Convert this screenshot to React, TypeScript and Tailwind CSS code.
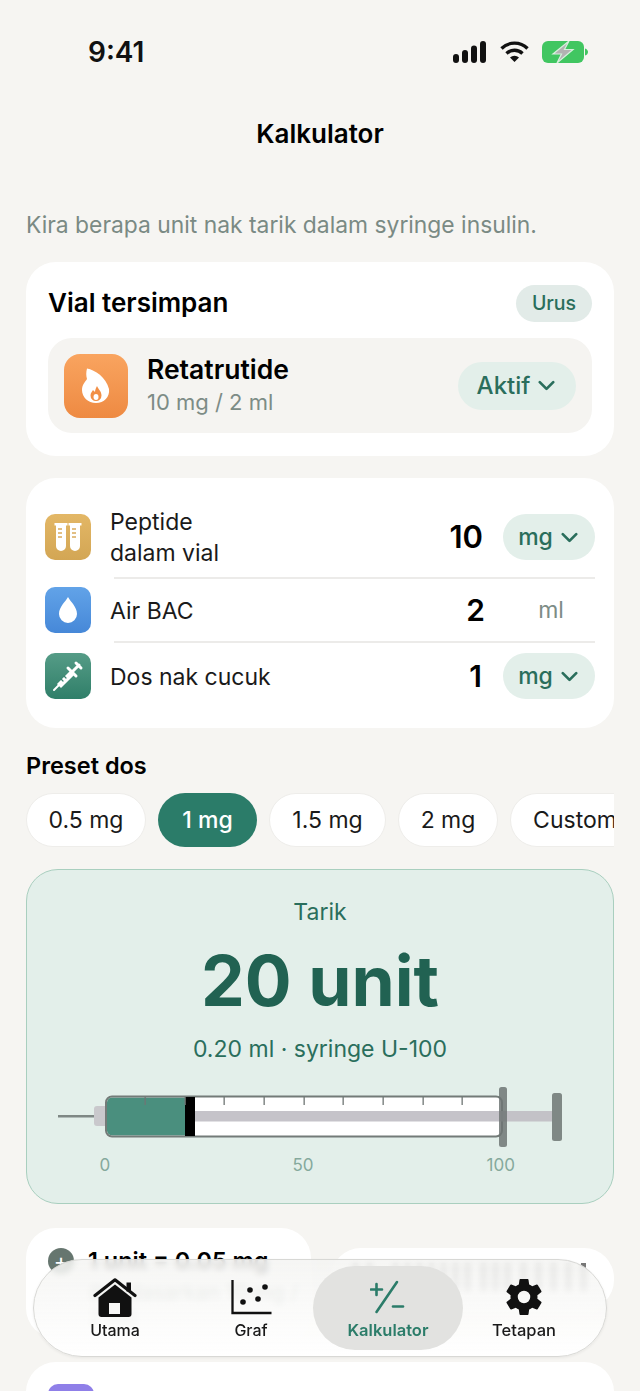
import React from 'react';
import { ChevronDown } from 'lucide-react';
import { IoSettingsSharp } from 'react-icons/io5';

// Pill with unit dropdown
const UnitPill = ({ label }: { label: string }) => (
  <div className="flex h-[46px] w-[92px] items-center justify-center gap-[3px] rounded-full bg-[#e3efea] pl-[3px] text-[23px] font-medium text-[#2a6e5c]">
    {label}
    <ChevronDown size={27} strokeWidth={2.4} />
  </div>
);

const IconTile = ({ className, children }: { className: string; children: React.ReactNode }) => (
  <div className={`flex h-[46px] w-[46px] shrink-0 items-center justify-center rounded-[10px] ${className}`}>
    {children}
  </div>
);

const Tubes = () => (
  <svg width="34" height="34" viewBox="0 0 34 34" fill="white">
    <path d="M3.500 3h13v2.500H15V26a5 5 0 0 1-10 0V5.500H3.500z" />
    <path d="M17.500 3h13v2.500H29V26a5 5 0 0 1-10 0V5.500h-1.500z" />
    <path d="M7 9h4M7 13h4M7 17h4M21 9h4M21 13h4M21 17h4" stroke="#d9ab5c" strokeWidth="1.5" />
  </svg>
);

const Drop = () => (
  <svg width="18" height="26" viewBox="0 0 18 26" fill="white">
    <path d="M9 0c2.500 5 9 9.500 9 17a9 9 0 0 1-18 0C0 9.500 6.500 5 9 0z" />
  </svg>
);

const SyringeIcon = () => (
  <svg width="32" height="32" viewBox="0 0 32 32" fill="none" stroke="white" strokeLinecap="round">
    <path d="M2 30l6-6" strokeWidth="2" />
    <path d="M7 25l12-12 3 3-12 12z" fill="white" strokeWidth="1.5" transform="translate(-1 -1)" />
    <path d="M16 8l8 8M21 11l6-6M24 3l5 5" strokeWidth="3" />
    <path d="M9 19l2 2M12 16l2 2" stroke="#3b8470" strokeWidth="1.2" />
  </svg>
);

const Flame = () => (
  <svg width="28" height="35" viewBox="0 0 28 35">
    <path
      d="M5 .5C13 2 24 9 27 21c1 8-5 14-13 14S0 29 0 22c0-5 3-8 5-11C4 8 4 4 5 .5z"
      fill="white"
    />
    <path d="M15 18c1 3 4.500 5 4.500 9.500a5.500 5.500 0 0 1-11 0c0-2.500 1.500-4 2.500-5.500 1 1 1.500 1.500 2 2 0-2 1-4 2-6z" fill="#f28f45" />
    <ellipse cx="14" cy="29" rx="2.500" ry="3" fill="white" />
  </svg>
);

const HouseIcon = () => (
  <svg width="44" height="39" viewBox="0 0 44 39" className="text-[#111]">
    <path d="M5.500 19.500L22 6.500l16.500 13V36a3 3 0 0 1-3 3h-27a3 3 0 0 1-3-3z" fill="currentColor" />
    <path d="M2 17.500L22 1.800l20 15.700" fill="none" stroke="currentColor" strokeWidth="3.200" strokeLinecap="round" strokeLinejoin="round" />
    <path d="M33.500 4.500h4.500v9h-4.500z" fill="currentColor" />
    <rect x="16" y="25" width="11" height="11" fill="#f7f7f6" />
  </svg>
);

const ChartIcon = () => (
  <svg width="41" height="36" viewBox="0 0 41 36" className="text-[#111]">
    <path d="M1.500 1v33h39" fill="none" stroke="currentColor" strokeWidth="2.300" />
    <circle cx="12" cy="23" r="2.800" fill="currentColor" />
    <circle cx="19" cy="11" r="2.800" fill="currentColor" />
    <circle cx="27" cy="20" r="2.800" fill="currentColor" />
    <circle cx="34" cy="8" r="2.800" fill="currentColor" />
  </svg>
);

const PlusMinusIcon = () => (
  <svg width="36" height="36" viewBox="0 0 36 36" stroke="#2b7c69" strokeWidth="2.600" strokeLinecap="round" fill="none">
    <path d="M27 3L6.500 33" />
    <path d="M1 10.500h11M6.500 5v11" />
    <path d="M23 27.500h10" />
  </svg>
);

const Syringe = () => (
  <svg width="520" height="66" viewBox="0 0 520 66" className="block">
    <rect x="0" y="28" width="37" height="2.500" fill="#7f8885" />
    <rect x="36" y="19" width="14" height="20" rx="3" fill="#c9c8cc" />
    <rect x="48" y="9.500" width="396" height="40" rx="6" fill="white" />
    <path d="M54 10.500h73v38H54a5 5 0 0 1-5-5v-28a5 5 0 0 1 5-5z" fill="#4a8f7e" />
    <rect x="48" y="9.500" width="396" height="40" rx="6" fill="none" stroke="#737b78" strokeWidth="2" />
    <rect x="127" y="10" width="10" height="39" fill="black" />
    <rect x="137" y="24" width="358" height="10.500" fill="#bfbdc3" fillOpacity="0.9" />
    {[87, 127, 166, 206, 246, 285, 325, 365, 404].map((x) => (
      <rect key={x} x={x - 0.5} y="10" width="1.300" height="8" fill="#6f7674" />
    ))}
    <rect x="441" y="0" width="8" height="60" rx="2.500" fill="#6f7674" fillOpacity="0.85" />
    <rect x="494" y="6" width="10" height="48" rx="2.500" fill="#7f8885" />
  </svg>
);

const presets = [
  { label: '0.5 mg', width: 'w-[120px]' },
  { label: '1 mg', width: 'w-[99px]' },
  { label: '1.5 mg', width: 'w-[117px]' },
  { label: '2 mg', width: 'w-[100px]' },
  { label: 'Custom', width: 'w-[130px]' },
];

export default function App() {
  return (
    <div className="relative h-[1391px] w-[640px] overflow-hidden bg-[#f6f5f2] font-['Inter',sans-serif] text-black">
      {/* Status bar */}
      <div className="flex h-[102px] items-start justify-between pl-[88px] pr-[52px] pt-[36px]">
        <span className="text-[28px] font-semibold leading-[32px] text-[#111]">9:41</span>
        <div className="mt-[5px] flex items-center gap-[12px]">
          <svg width="34" height="22" viewBox="0 0 34 22" fill="#111">
            <rect x="0" y="13" width="6" height="9" rx="3" />
            <rect x="9" y="9" width="6" height="13" rx="3" />
            <rect x="18" y="4.500" width="6" height="17.500" rx="3" />
            <rect x="27" y="0" width="6" height="22" rx="3" />
          </svg>
          <svg width="31" height="22" viewBox="0 0 30 22" fill="none" stroke="#111" strokeWidth="3.400">
            <path d="M2 7.500a18.500 18.500 0 0 1 26 0" />
            <path d="M7 12.500a11.500 11.500 0 0 1 16 0" />
            <path d="M15 21l-4.500-4.500a6.400 6.400 0 0 1 9 0z" fill="#111" stroke="none" />
          </svg>
          <svg width="46" height="22" viewBox="0 0 46 22">
            <rect x="0" y="0" width="42" height="22" rx="6" fill="#41c661" />
            <path d="M43 7.500c2 .5 3 2 3 3.500s-1 3-3 3.500z" fill="#41c661" />
            <path d="M27 0L11 13h8.500L15 22l16-13.500h-8.500z" fill="#b2b2b2" stroke="#d6f0dd" strokeWidth="1.200" />
          </svg>
        </div>
      </div>

      {/* Header */}
      <h1 className="mt-[16px] text-center text-[26px] font-semibold leading-[32px]">Kalkulator</h1>

      <div className="px-[26px]">
        <p className="mt-[60px] text-[22.850px] leading-[30px] text-[#7a8a84]">Kira berapa unit nak tarik dalam syringe insulin.</p>

        {/* Saved vial */}
        <section className="mt-[22px] h-[194px] rounded-[30px] bg-white pl-[22px] pr-[22px] pt-[23px]">
          <div className="flex h-[37px] items-center justify-between">
            <h2 className="pb-[2px] text-[26px] font-semibold">Vial tersimpan</h2>
            <span className="flex h-[37px] w-[76px] items-center justify-center rounded-full bg-[#e2ebe8] pt-[1px] text-[19.500px] font-medium text-[#2a6e5c]">Urus</span>
          </div>
          <div className="mt-[16px] flex h-[95px] items-center rounded-[24px] bg-[#f5f4f1] pl-[16px] pr-[16px]">
            <div className="flex h-[64px] w-[64px] items-center justify-center rounded-[16px] bg-gradient-to-b from-[#f9a45f] to-[#ee8a42]">
              <Flame />
            </div>
            <div className="ml-[19px] flex-1">
              <div className="text-[26.500px] font-semibold leading-[33px]">Retatrutide</div>
              <div className="pt-[1px] text-[22px] leading-[31px] text-[#7d8c86]">10 mg / 2 ml</div>
            </div>
            <div className="flex h-[48px] w-[118px] items-center justify-center gap-[3px] rounded-full bg-[#e3efea] pl-[3px] text-[24px] font-medium text-[#2a6e5c]">
              Aktif
              <ChevronDown size={27} strokeWidth={2.4} />
            </div>
          </div>
        </section>

        {/* Inputs */}
        <section className="mt-[22px] h-[250px] rounded-[30px] bg-white pl-[19px] pr-[19px] pt-[36px]">
          <div className="flex h-[46px] items-center">
            <IconTile className="bg-gradient-to-b from-[#e3b766] to-[#d3a654]"><Tubes /></IconTile>
            <div className="ml-[19px] flex-1 pt-[2px] text-[23px] leading-[31px] text-[#1a1a1a]">Peptide<br />dalam vial</div>
            <span className="mr-[20px] text-[31px] font-semibold">10</span>
            <UnitPill label="mg" />
          </div>
          <div className="ml-[69px] mt-[17px] h-[2px] bg-[#ecebe9]" />
          <div className="mt-[8px] flex h-[46px] items-center">
            <IconTile className="bg-gradient-to-b from-[#62a3e8] to-[#4688d8]"><Drop /></IconTile>
            <div className="ml-[19px] flex-1 pt-[2px] text-[23px] text-[#1a1a1a]">Air BAC</div>
            <span className="mr-[18px] text-[30px] font-semibold">2</span>
            <div className="w-[92px] pl-[4px] text-center text-[23px] text-[#7d8c86]">ml</div>
          </div>
          <div className="ml-[69px] mt-[8px] h-[2px] bg-[#ecebe9]" />
          <div className="mt-[10px] flex h-[46px] items-center">
            <IconTile className="bg-gradient-to-b from-[#559c87] to-[#2f7f69]"><SyringeIcon /></IconTile>
            <div className="ml-[19px] flex-1 pt-[2px] text-[23px] text-[#1a1a1a]">Dos nak cucuk</div>
            <span className="mr-[21px] text-[30px] font-semibold">1</span>
            <UnitPill label="mg" />
          </div>
        </section>

        {/* Preset */}
        <h2 className="mt-[23px] text-[23.500px] font-semibold leading-[30px]">Preset dos</h2>
        <div className="mt-[12px] flex h-[54px] gap-[12px] overflow-hidden">
          {presets.map((p) => (
            <div
              key={p.label}
              className={`flex h-[54px] shrink-0 items-center justify-center rounded-full text-[23px] ${p.width} ${
                p.label === '1 mg' ? 'bg-[#2b7c69] font-medium text-white' : 'border border-[#eeedea] bg-white text-[#1a1a1a]'
              }`}
            >
              {p.label}
            </div>
          ))}
        </div>

        {/* Result */}
        <section className="mt-[22px] h-[335px] rounded-[32px] border-[1.5px] border-[#a9cfbf] bg-[#e3efea] pt-[26.500px] text-center">
          <div className="text-[23px] leading-[30px] text-[#2a6e5c]">Tarik</div>
          <div className="mt-[14px] text-[69.500px] font-bold leading-[80px] text-[#216252]">20 unit</div>
          <div className="mt-[13px] text-[23px] leading-[30px] text-[#2a6e5c]">0.20 ml · syringe U-100</div>
          <div className="ml-[30.500px] mt-[23px]">
            <Syringe />
          </div>
          <div className="relative h-[24px] text-[17px] leading-[24px] text-[#85a99c]">
            <span className="absolute left-[72.500px]">0</span>
            <span className="absolute left-[265.500px]">50</span>
            <span className="absolute left-[459.500px]">100</span>
          </div>
        </section>

        {/* Cards under the nav */}
        <div className="mt-[24px] flex items-start gap-[20px]">
          <div className="h-[110px] w-[285px] rounded-[30px] bg-white pl-[22px] pt-[18px]">
            <div className="flex items-center gap-[14px]">
              <div className="flex h-[26px] w-[26px] items-center justify-center rounded-full bg-[#66766f] text-[22px] leading-none text-white">+</div>
              <div className="text-[23.500px] font-semibold leading-[30px]">1 unit = 0.05 mg</div>
            </div>
            <div className="ml-[40px] mt-[4px] w-[215px] text-[21px] leading-[25px] text-[#7d8c86]">(berdasarkan 10 mg / 2 ml)</div>
          </div>
          <div className="mt-[20px] h-[62px] flex-1 rounded-[30px] bg-white pt-[15px]">
            <svg width="283" height="28" viewBox="0 0 283 28" fill="#777">
              {[22, 36, 62, 74, 86, 98, 110, 122, 134, 150, 162, 174, 190, 205, 220, 235, 250].map((x) => (
                <rect key={x} x={x} y="0" width="5" height="28" />
              ))}
            </svg>
          </div>
        </div>
        <div className="mt-[24px] h-[100px] rounded-[30px] bg-white pl-[22px] pt-[22px]">
          <div className="h-[46px] w-[46px] rounded-[10px] bg-[#8f7fe8]" />
        </div>
      </div>

      {/* Floating tab bar */}
      <nav className="absolute left-[33px] top-[1259px] flex h-[98px] w-[574px] items-start rounded-full border border-[#d8d8d5] bg-gradient-to-b from-[#f4f4f2]/85 to-white/95 px-[7px] shadow-[0_1px_3px_rgba(0,0,0,0.06)] backdrop-blur-[3px]">
        <div className="flex w-[148px] flex-col items-center pt-[16px]">
          <div className="flex h-[42px] items-center"><HouseIcon /></div>
          <span className="mt-[2px] text-[16px] font-medium leading-[20px] text-[#1a1a1a]">Utama</span>
        </div>
        <div className="flex w-[124px] flex-col items-center pt-[16px]">
          <div className="flex h-[42px] items-center"><ChartIcon /></div>
          <span className="mt-[2px] text-[16px] font-medium leading-[20px] text-[#1a1a1a]">Graf</span>
        </div>
        <div className="mt-[6px] flex h-[84px] w-[150px] flex-col items-center rounded-full bg-[#e2e2e0] pt-[10px]">
          <div className="flex h-[42px] items-center"><PlusMinusIcon /></div>
          <span className="mt-[2px] text-[16.500px] font-semibold leading-[20px] text-[#2b7c69]">Kalkulator</span>
        </div>
        <div className="flex w-[122px] flex-col items-center pt-[16px]">
          <div className="flex h-[42px] items-center"><IoSettingsSharp size={40} className="text-[#111]" /></div>
          <span className="mt-[2px] text-[16.500px] font-medium leading-[20px] text-[#1a1a1a]">Tetapan</span>
        </div>
      </nav>
    </div>
  );
}
